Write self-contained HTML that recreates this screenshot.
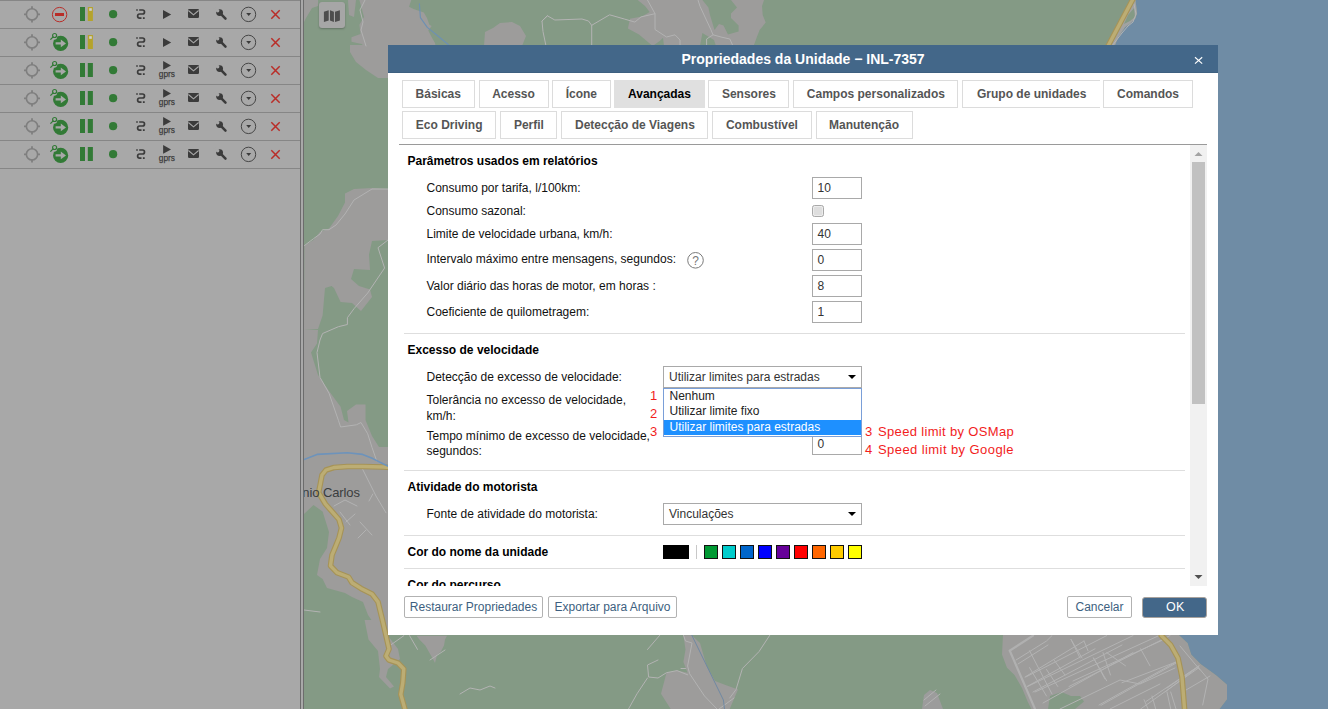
<!DOCTYPE html><html><head><meta charset="utf-8"><style>*{margin:0;padding:0;box-sizing:border-box}
html,body{width:1328px;height:709px;overflow:hidden;position:relative;font-family:"Liberation Sans",sans-serif;font-size:12px;color:#000;background:#849a85}
.a{position:absolute}
.t{position:absolute;white-space:nowrap}
.tab{position:absolute;height:28px;border:1px solid #dcdcdc;font-weight:bold;color:#555;text-align:center;line-height:26px;white-space:nowrap;font-size:12px;background:#fff}
.tab.on{background:#e0e0e0;border-color:#e0e0e0;color:#000}
.inp{position:absolute;width:50px;height:22px;border:1px solid #a9a9a9;background:#fff;padding-left:4.5px;line-height:20px;color:#333}
.sel{position:absolute;width:199px;height:22px;border:1px solid #a9a9a9;background:#fff;padding-left:5px;line-height:20px;color:#333}
.sep{position:absolute;width:781px;height:1px;background:#dedede}
.btn{position:absolute;top:596px;height:22px;border:1px solid #b2b2b2;border-radius:2px;background:#fff;color:#3d5f80;text-align:center;line-height:19px;padding-top:1px;white-space:nowrap}
.btn.ok{background:#436789;border-color:#a8a29d;color:#fff;font-size:12.5px;border-radius:3px;letter-spacing:0.2px;line-height:18px;padding-left:2px;padding-top:0;height:21px;top:596.5px;width:64.5px!important}
</style></head><body>
<svg class="a" style="left:0;top:0" width="304" height="709" viewBox="0 0 304 709">
<rect x="0" y="0" width="300" height="709" fill="#a8a8a8"/>
<rect x="0" y="0" width="300" height="1" fill="#868686"/>
<g transform="translate(0,0)">
<rect x="0" y="28" width="300" height="1" fill="#868686"/>
<circle cx="32" cy="14.4" r="5.6" fill="none" stroke="#7f7f7f" stroke-width="1.6"/>
<path d="M32 6.2v2.6M32 19.8v2.6M24 14.4h2.6M37.4 14.4h2.6" stroke="#7f7f7f" stroke-width="1.8"/>
<circle cx="59.6" cy="14.6" r="7.2" fill="none" stroke="#b92d28" stroke-width="1"/>
<rect x="55" y="13" width="9" height="3" fill="#b92d28"/>
<rect x="80" y="7" width="5" height="14" fill="#327a36"/>
<rect x="87.8" y="7" width="5.1" height="14" fill="#b5a32c"/>
<rect x="89.2" y="8.2" width="2.6" height="2.6" fill="#cfcfcf"/>
<circle cx="113.1" cy="14.2" r="4.1" fill="#327a36"/>
<path d="M136.2 10h1.6M139.2 10h3.3a2 2 0 0 1 0 4h-2.8a2.1 2.1 0 0 0 0 4.2h1.8M142.9 18.2h1.8" fill="none" stroke="#3b3b3b" stroke-width="1.7"/>
<path d="M163 10v9l8.2-4.5z" fill="#3b3b3b"/>
<rect x="188" y="9" width="11" height="9" rx="1.2" fill="#3b3b3b"/>
<path d="M188.4 10.5l5.1 4.3 5.1-4.3" fill="none" stroke="#a8a8a8" stroke-width="1.1"/>
<path d="M220.6 13.6l4.9 5" stroke="#3b3b3b" stroke-width="2.5" stroke-linecap="round"/>
<circle cx="219.6" cy="12.6" r="3.4" fill="#3b3b3b"/>
<circle cx="217.7" cy="10.7" r="1.7" fill="#a8a8a8"/>
<path d="M217.7 10.7l-3 -3" stroke="#a8a8a8" stroke-width="2.6"/>
<circle cx="248.5" cy="14.4" r="7.2" fill="none" stroke="#3a3a3a" stroke-width="0.9"/>
<path d="M246.2 13.1h5l-2.5 3z" fill="#3b3b3b"/>
<path d="M271.3 10.3l8.4 8.4M279.7 10.3l-8.4 8.4" stroke="#b92d28" stroke-width="1.5"/>
</g>
<g transform="translate(0,28)">
<rect x="0" y="28" width="300" height="1" fill="#868686"/>
<circle cx="32" cy="14.4" r="5.6" fill="none" stroke="#7f7f7f" stroke-width="1.6"/>
<path d="M32 6.2v2.6M32 19.8v2.6M24 14.4h2.6M37.4 14.4h2.6" stroke="#7f7f7f" stroke-width="1.8"/>
<circle cx="60.6" cy="15.4" r="7.6" fill="#327a36"/>
<circle cx="54" cy="8.6" r="3.2" fill="#a8a8a8"/>
<path d="M55.6 14.2h5.2v-2.6l5.2 3.8-5.2 3.8v-2.6h-5.2z" fill="#a8a8a8"/>
<circle cx="54.6" cy="7.5" r="2" fill="none" stroke="#327a36" stroke-width="1.2"/>
<path d="M53.2 8.9L50.4 11.6" stroke="#327a36" stroke-width="1.3"/>
<rect x="80" y="7" width="5" height="14" fill="#327a36"/>
<rect x="87.8" y="7" width="5.1" height="14" fill="#b5a32c"/>
<rect x="89.2" y="8.2" width="2.6" height="2.6" fill="#cfcfcf"/>
<circle cx="113.1" cy="14.2" r="4.1" fill="#327a36"/>
<path d="M136.2 10h1.6M139.2 10h3.3a2 2 0 0 1 0 4h-2.8a2.1 2.1 0 0 0 0 4.2h1.8M142.9 18.2h1.8" fill="none" stroke="#3b3b3b" stroke-width="1.7"/>
<path d="M163 10v9l8.2-4.5z" fill="#3b3b3b"/>
<rect x="188" y="9" width="11" height="9" rx="1.2" fill="#3b3b3b"/>
<path d="M188.4 10.5l5.1 4.3 5.1-4.3" fill="none" stroke="#a8a8a8" stroke-width="1.1"/>
<path d="M220.6 13.6l4.9 5" stroke="#3b3b3b" stroke-width="2.5" stroke-linecap="round"/>
<circle cx="219.6" cy="12.6" r="3.4" fill="#3b3b3b"/>
<circle cx="217.7" cy="10.7" r="1.7" fill="#a8a8a8"/>
<path d="M217.7 10.7l-3 -3" stroke="#a8a8a8" stroke-width="2.6"/>
<circle cx="248.5" cy="14.4" r="7.2" fill="none" stroke="#3a3a3a" stroke-width="0.9"/>
<path d="M246.2 13.1h5l-2.5 3z" fill="#3b3b3b"/>
<path d="M271.3 10.3l8.4 8.4M279.7 10.3l-8.4 8.4" stroke="#b92d28" stroke-width="1.5"/>
</g>
<g transform="translate(0,56)">
<rect x="0" y="28" width="300" height="1" fill="#868686"/>
<circle cx="32" cy="14.4" r="5.6" fill="none" stroke="#7f7f7f" stroke-width="1.6"/>
<path d="M32 6.2v2.6M32 19.8v2.6M24 14.4h2.6M37.4 14.4h2.6" stroke="#7f7f7f" stroke-width="1.8"/>
<circle cx="60.6" cy="15.4" r="7.6" fill="#327a36"/>
<circle cx="54" cy="8.6" r="3.2" fill="#a8a8a8"/>
<path d="M55.6 14.2h5.2v-2.6l5.2 3.8-5.2 3.8v-2.6h-5.2z" fill="#a8a8a8"/>
<circle cx="54.6" cy="7.5" r="2" fill="none" stroke="#327a36" stroke-width="1.2"/>
<path d="M53.2 8.9L50.4 11.6" stroke="#327a36" stroke-width="1.3"/>
<rect x="80" y="7" width="5" height="14" fill="#327a36"/>
<rect x="87.8" y="7" width="5.1" height="14" fill="#327a36"/>
<circle cx="113.1" cy="14.2" r="4.1" fill="#327a36"/>
<path d="M136.2 10h1.6M139.2 10h3.3a2 2 0 0 1 0 4h-2.8a2.1 2.1 0 0 0 0 4.2h1.8M142.9 18.2h1.8" fill="none" stroke="#3b3b3b" stroke-width="1.7"/>
<path d="M163.1 5v8.8l7.9-4.4z" fill="#3b3b3b"/>
<text x="158.8" y="21" font-family="Liberation Sans" font-size="9.5" fill="#3b3b3b" stroke="#3b3b3b" stroke-width="0.25" textLength="16.2" lengthAdjust="spacingAndGlyphs">gprs</text>
<rect x="188" y="9" width="11" height="9" rx="1.2" fill="#3b3b3b"/>
<path d="M188.4 10.5l5.1 4.3 5.1-4.3" fill="none" stroke="#a8a8a8" stroke-width="1.1"/>
<path d="M220.6 13.6l4.9 5" stroke="#3b3b3b" stroke-width="2.5" stroke-linecap="round"/>
<circle cx="219.6" cy="12.6" r="3.4" fill="#3b3b3b"/>
<circle cx="217.7" cy="10.7" r="1.7" fill="#a8a8a8"/>
<path d="M217.7 10.7l-3 -3" stroke="#a8a8a8" stroke-width="2.6"/>
<circle cx="248.5" cy="14.4" r="7.2" fill="none" stroke="#3a3a3a" stroke-width="0.9"/>
<path d="M246.2 13.1h5l-2.5 3z" fill="#3b3b3b"/>
<path d="M271.3 10.3l8.4 8.4M279.7 10.3l-8.4 8.4" stroke="#b92d28" stroke-width="1.5"/>
</g>
<g transform="translate(0,84)">
<rect x="0" y="28" width="300" height="1" fill="#868686"/>
<circle cx="32" cy="14.4" r="5.6" fill="none" stroke="#7f7f7f" stroke-width="1.6"/>
<path d="M32 6.2v2.6M32 19.8v2.6M24 14.4h2.6M37.4 14.4h2.6" stroke="#7f7f7f" stroke-width="1.8"/>
<circle cx="60.6" cy="15.4" r="7.6" fill="#327a36"/>
<circle cx="54" cy="8.6" r="3.2" fill="#a8a8a8"/>
<path d="M55.6 14.2h5.2v-2.6l5.2 3.8-5.2 3.8v-2.6h-5.2z" fill="#a8a8a8"/>
<circle cx="54.6" cy="7.5" r="2" fill="none" stroke="#327a36" stroke-width="1.2"/>
<path d="M53.2 8.9L50.4 11.6" stroke="#327a36" stroke-width="1.3"/>
<rect x="80" y="7" width="5" height="14" fill="#327a36"/>
<rect x="87.8" y="7" width="5.1" height="14" fill="#327a36"/>
<circle cx="113.1" cy="14.2" r="4.1" fill="#327a36"/>
<path d="M136.2 10h1.6M139.2 10h3.3a2 2 0 0 1 0 4h-2.8a2.1 2.1 0 0 0 0 4.2h1.8M142.9 18.2h1.8" fill="none" stroke="#3b3b3b" stroke-width="1.7"/>
<path d="M163.1 5v8.8l7.9-4.4z" fill="#3b3b3b"/>
<text x="158.8" y="21" font-family="Liberation Sans" font-size="9.5" fill="#3b3b3b" stroke="#3b3b3b" stroke-width="0.25" textLength="16.2" lengthAdjust="spacingAndGlyphs">gprs</text>
<rect x="188" y="9" width="11" height="9" rx="1.2" fill="#3b3b3b"/>
<path d="M188.4 10.5l5.1 4.3 5.1-4.3" fill="none" stroke="#a8a8a8" stroke-width="1.1"/>
<path d="M220.6 13.6l4.9 5" stroke="#3b3b3b" stroke-width="2.5" stroke-linecap="round"/>
<circle cx="219.6" cy="12.6" r="3.4" fill="#3b3b3b"/>
<circle cx="217.7" cy="10.7" r="1.7" fill="#a8a8a8"/>
<path d="M217.7 10.7l-3 -3" stroke="#a8a8a8" stroke-width="2.6"/>
<circle cx="248.5" cy="14.4" r="7.2" fill="none" stroke="#3a3a3a" stroke-width="0.9"/>
<path d="M246.2 13.1h5l-2.5 3z" fill="#3b3b3b"/>
<path d="M271.3 10.3l8.4 8.4M279.7 10.3l-8.4 8.4" stroke="#b92d28" stroke-width="1.5"/>
</g>
<g transform="translate(0,112)">
<rect x="0" y="28" width="300" height="1" fill="#868686"/>
<circle cx="32" cy="14.4" r="5.6" fill="none" stroke="#7f7f7f" stroke-width="1.6"/>
<path d="M32 6.2v2.6M32 19.8v2.6M24 14.4h2.6M37.4 14.4h2.6" stroke="#7f7f7f" stroke-width="1.8"/>
<circle cx="60.6" cy="15.4" r="7.6" fill="#327a36"/>
<circle cx="54" cy="8.6" r="3.2" fill="#a8a8a8"/>
<path d="M55.6 14.2h5.2v-2.6l5.2 3.8-5.2 3.8v-2.6h-5.2z" fill="#a8a8a8"/>
<circle cx="54.6" cy="7.5" r="2" fill="none" stroke="#327a36" stroke-width="1.2"/>
<path d="M53.2 8.9L50.4 11.6" stroke="#327a36" stroke-width="1.3"/>
<rect x="80" y="7" width="5" height="14" fill="#327a36"/>
<rect x="87.8" y="7" width="5.1" height="14" fill="#327a36"/>
<circle cx="113.1" cy="14.2" r="4.1" fill="#327a36"/>
<path d="M136.2 10h1.6M139.2 10h3.3a2 2 0 0 1 0 4h-2.8a2.1 2.1 0 0 0 0 4.2h1.8M142.9 18.2h1.8" fill="none" stroke="#3b3b3b" stroke-width="1.7"/>
<path d="M163.1 5v8.8l7.9-4.4z" fill="#3b3b3b"/>
<text x="158.8" y="21" font-family="Liberation Sans" font-size="9.5" fill="#3b3b3b" stroke="#3b3b3b" stroke-width="0.25" textLength="16.2" lengthAdjust="spacingAndGlyphs">gprs</text>
<rect x="188" y="9" width="11" height="9" rx="1.2" fill="#3b3b3b"/>
<path d="M188.4 10.5l5.1 4.3 5.1-4.3" fill="none" stroke="#a8a8a8" stroke-width="1.1"/>
<path d="M220.6 13.6l4.9 5" stroke="#3b3b3b" stroke-width="2.5" stroke-linecap="round"/>
<circle cx="219.6" cy="12.6" r="3.4" fill="#3b3b3b"/>
<circle cx="217.7" cy="10.7" r="1.7" fill="#a8a8a8"/>
<path d="M217.7 10.7l-3 -3" stroke="#a8a8a8" stroke-width="2.6"/>
<circle cx="248.5" cy="14.4" r="7.2" fill="none" stroke="#3a3a3a" stroke-width="0.9"/>
<path d="M246.2 13.1h5l-2.5 3z" fill="#3b3b3b"/>
<path d="M271.3 10.3l8.4 8.4M279.7 10.3l-8.4 8.4" stroke="#b92d28" stroke-width="1.5"/>
</g>
<g transform="translate(0,140)">
<rect x="0" y="28" width="300" height="1" fill="#868686"/>
<circle cx="32" cy="14.4" r="5.6" fill="none" stroke="#7f7f7f" stroke-width="1.6"/>
<path d="M32 6.2v2.6M32 19.8v2.6M24 14.4h2.6M37.4 14.4h2.6" stroke="#7f7f7f" stroke-width="1.8"/>
<circle cx="60.6" cy="15.4" r="7.6" fill="#327a36"/>
<circle cx="54" cy="8.6" r="3.2" fill="#a8a8a8"/>
<path d="M55.6 14.2h5.2v-2.6l5.2 3.8-5.2 3.8v-2.6h-5.2z" fill="#a8a8a8"/>
<circle cx="54.6" cy="7.5" r="2" fill="none" stroke="#327a36" stroke-width="1.2"/>
<path d="M53.2 8.9L50.4 11.6" stroke="#327a36" stroke-width="1.3"/>
<rect x="80" y="7" width="5" height="14" fill="#327a36"/>
<rect x="87.8" y="7" width="5.1" height="14" fill="#327a36"/>
<circle cx="113.1" cy="14.2" r="4.1" fill="#327a36"/>
<path d="M136.2 10h1.6M139.2 10h3.3a2 2 0 0 1 0 4h-2.8a2.1 2.1 0 0 0 0 4.2h1.8M142.9 18.2h1.8" fill="none" stroke="#3b3b3b" stroke-width="1.7"/>
<path d="M163.1 5v8.8l7.9-4.4z" fill="#3b3b3b"/>
<text x="158.8" y="21" font-family="Liberation Sans" font-size="9.5" fill="#3b3b3b" stroke="#3b3b3b" stroke-width="0.25" textLength="16.2" lengthAdjust="spacingAndGlyphs">gprs</text>
<rect x="188" y="9" width="11" height="9" rx="1.2" fill="#3b3b3b"/>
<path d="M188.4 10.5l5.1 4.3 5.1-4.3" fill="none" stroke="#a8a8a8" stroke-width="1.1"/>
<path d="M220.6 13.6l4.9 5" stroke="#3b3b3b" stroke-width="2.5" stroke-linecap="round"/>
<circle cx="219.6" cy="12.6" r="3.4" fill="#3b3b3b"/>
<circle cx="217.7" cy="10.7" r="1.7" fill="#a8a8a8"/>
<path d="M217.7 10.7l-3 -3" stroke="#a8a8a8" stroke-width="2.6"/>
<circle cx="248.5" cy="14.4" r="7.2" fill="none" stroke="#3a3a3a" stroke-width="0.9"/>
<path d="M246.2 13.1h5l-2.5 3z" fill="#3b3b3b"/>
<path d="M271.3 10.3l8.4 8.4M279.7 10.3l-8.4 8.4" stroke="#b92d28" stroke-width="1.5"/>
</g>
<rect x="300" y="0" width="1" height="709" fill="#6c6c6c"/>
<rect x="301" y="0" width="2" height="709" fill="#a8a8a8"/>
<rect x="303" y="0" width="1" height="709" fill="#6c6c6c"/>
</svg>
<div class="a" style="left:304px;top:0;width:1024px;height:709px;overflow:hidden">
<svg class="a" style="left:-304px;top:0" width="1328" height="709" viewBox="0 0 1328 709">
<rect x="304" y="0" width="1024" height="709" fill="#849a85"/>
<path d="M304.0 0.0 L318.0 0.0 L318.0 6.0 L312.0 8.0 L306.0 18.0 L304.0 22.0 Z" fill="#9d9c9b"/>
<path d="M359.4 0.0 L411.3 0.0 L409.0 6.8 L413.6 9.0 L423.8 12.4 L427.0 18.0 L429.4 24.8 L431.7 26.0 L428.3 30.5 L431.7 37.3 L435.0 43.0 L435.6 46.0 L364.0 46.0 L361.6 44.0 L351.5 41.8 L351.5 37.3 L360.5 34.0 L359.4 24.8 L364.0 17.0 Z" fill="#9d9c9b"/>
<path d="M348.0 0.0 L356.0 0.0 L354.0 17.0 L349.0 15.0 Z" fill="#9d9c9b"/>
<path d="M484.0 46.0 L485.0 32.0 L493.0 28.0 L500.0 23.0 L512.0 22.0 L520.0 26.0 L526.0 36.0 L522.0 46.0 Z" fill="#9d9c9b"/>
<path d="M637.7 0.0 L702.4 0.0 L708.4 7.5 L710.0 15.0 L714.5 30.0 L719.0 24.0 L723.5 25.6 L728.0 34.6 L738.6 31.6 L738.6 25.6 L731.0 18.0 L731.0 13.5 L737.0 7.5 L731.0 0.0 L764.0 0.0 L762.0 6.0 L762.7 15.0 L765.7 22.6 L759.6 30.0 L756.6 37.7 L753.6 46.0 L716.0 46.0 L714.0 40.0 L702.4 33.0 L700.0 46.0 L664.0 46.0 L663.0 37.7 L660.0 40.7 L652.7 46.0 L639.0 34.6 L627.9 28.6 L630.0 18.8 L642.0 16.6 L649.7 12.0 L645.0 6.0 Z" fill="#9d9c9b"/>
<path d="M350.0 45.0 L388.0 45.0 L388.0 78.0 L378.0 78.0 L366.0 70.0 L356.0 62.0 L350.0 52.0 Z" fill="#9d9c9b"/>
<path d="M304.5 245.5 L313.5 240.0 L320.0 232.0 L329.0 228.5 L338.0 216.0 L345.0 202.6 L345.0 193.5 L354.0 189.0 L372.0 188.0 L388.0 189.0 L388.0 240.0 L372.0 241.0 L369.0 254.5 L370.0 270.0 L354.0 269.0 L351.0 279.0 L359.0 286.0 L370.0 289.5 L372.0 297.0 L361.0 311.0 L352.0 303.0 L340.6 302.0 L334.0 288.0 L331.6 286.0 L325.0 288.0 L322.6 315.4 L318.0 329.0 L304.0 329.0 Z" fill="#9d9c9b"/>
<path d="M304.0 329.0 L318.0 330.0 L317.0 343.5 L311.0 352.6 L318.0 375.0 L329.0 391.0 L340.6 406.7 L344.0 420.0 L348.5 422.5 L347.0 411.0 L356.0 404.5 L365.5 404.5 L365.5 420.0 L372.0 436.0 L379.0 447.0 L388.0 447.0 L388.0 640.0 L374.5 624.5 L368.0 615.0 L363.0 602.0 L352.0 597.0 L345.0 593.0 L327.0 588.0 L322.6 579.0 L317.0 575.0 L320.0 559.0 L327.0 548.0 L329.0 532.0 L322.6 511.6 L313.5 505.0 L304.0 514.0 Z" fill="#9d9c9b"/>
<path d="M364.6 620.0 L388.0 620.0 L388.0 635.7 L398.0 649.0 L400.0 659.0 L388.0 669.0 L386.0 677.0 L394.0 686.5 L390.0 688.5 L379.0 677.0 L380.0 669.0 L378.0 651.0 L368.5 639.6 Z" fill="#9d9c9b"/>
<path d="M416.5 635.7 L419.4 639.6 L425.3 645.5 L433.1 659.2 L435.0 663.0 L437.0 655.2 L441.0 651.3 L444.0 645.5 L445.0 639.6 L447.0 635.7 Z" fill="#9d9c9b"/>
<path d="M922.0 709.0 L924.0 695.0 L930.0 690.0 L937.0 693.0 L943.0 709.0 Z" fill="#9c9c9c"/>
<path d="M683.4 635.2 L691.8 635.2 L700.0 643.0 L706.6 666.0 L715.0 681.0 L725.5 685.0 L738.0 689.6 L729.7 709.0 L670.7 709.0 L661.0 693.8 L666.5 672.7 L677.0 670.6 L687.6 672.7 L683.4 662.0 L685.5 649.5 Z" fill="#9d9c9b"/>
<path d="M1003.0 634.0 L1178.0 634.0 L1187.7 643.0 L1191.4 654.5 L1200.8 664.0 L1216.0 675.0 L1227.0 684.6 L1227.0 699.6 L1219.7 709.0 L1031.4 709.0 L1027.6 701.5 L1022.0 688.0 L1014.5 675.0 L1007.0 667.7 L1002.0 654.5 Z" fill="#9d9c9b"/>
<path d="M1048.0 709.0 L1050.0 696.0 L1061.5 692.0 L1071.0 696.0 L1080.0 696.0 L1084.0 701.5 L1075.0 709.0 Z" fill="#849a85"/>
<path d="M1135.5 0.0 L1328.0 0.0 L1328.0 709.0 L1219.7 709.0 L1227.0 699.6 L1227.0 684.6 L1216.0 675.0 L1200.8 664.0 L1191.4 654.5 L1187.7 643.0 L1178.0 634.0 L1160.0 600.0 L1114.7 46.0 L1118.6 36.4 L1125.0 27.3 L1130.0 23.4 L1135.5 18.2 L1137.0 13.0 Z" fill="#6f8ca5"/>
<path d="M1131.0 0.0 L1135.5 0.0 L1137.0 13.0 L1135.5 18.2 L1130.0 23.4 L1125.0 27.3 L1118.6 36.4 L1114.7 46.0 L1108.0 46.0 Z" fill="#a2a2a2"/>
<path d="M1134.0 8.0 L1135.0 17.0 L1130.0 21.0 L1124.0 24.0 L1128.0 15.0 Z" fill="#849a85"/>
<path d="M304.5 245.5 L313.5 238.7 L320.0 234.0 L322.6 229.7 L329.0 229.7 L336.0 225.0 L345.0 214.0 L354.0 200.0 L372.0 189.0 L388.0 189.0" fill="none" stroke="#b3b3b3" stroke-width="1.0" stroke-linejoin="round" stroke-linecap="round" />
<path d="M388.0 240.0 L378.0 247.7 L384.6 268.0 L367.7 293.0 L354.0 308.7 L347.4 317.7 L347.4 324.5 L338.4 326.7 L322.6 333.5 L320.0 340.0 L317.0 352.6 L320.0 377.4 L329.0 393.2 L338.4 420.3 L340.6 427.0 L356.4 424.8 L361.0 422.5 L367.7 433.8 L372.0 447.4 L376.7 461.0" fill="none" stroke="#b3b3b3" stroke-width="1.0" stroke-linejoin="round" stroke-linecap="round" />
<path d="M361.0 466.0 L368.0 480.0 L376.0 496.0 L386.0 512.8" fill="none" stroke="#b3b3b3" stroke-width="1.0" stroke-linejoin="round" stroke-linecap="round" />
<path d="M372.8 494.0 L369.0 501.0" fill="none" stroke="#b3b3b3" stroke-width="1.0" stroke-linejoin="round" stroke-linecap="round" />
<path d="M334.0 506.0 L345.0 500.0 L357.0 506.0" fill="none" stroke="#b3b3b3" stroke-width="1.0" stroke-linejoin="round" stroke-linecap="round" />
<path d="M340.0 512.0 L350.0 525.0" fill="none" stroke="#b3b3b3" stroke-width="1.0" stroke-linejoin="round" stroke-linecap="round" />
<path d="M355.0 514.0 L346.0 522.0" fill="none" stroke="#b3b3b3" stroke-width="1.0" stroke-linejoin="round" stroke-linecap="round" />
<path d="M360.0 522.0 L372.0 535.0" fill="none" stroke="#b3b3b3" stroke-width="1.0" stroke-linejoin="round" stroke-linecap="round" />
<path d="M366.0 530.0 L358.0 538.0" fill="none" stroke="#b3b3b3" stroke-width="1.0" stroke-linejoin="round" stroke-linecap="round" />
<path d="M304.0 610.0 L320.0 612.0" fill="none" stroke="#b3b3b3" stroke-width="1.0" stroke-linejoin="round" stroke-linecap="round" />
<path d="M542.0 21.0 L547.4 15.8 L554.8 20.0 L582.0 19.0 L588.5 21.0 L591.7 25.3 L609.6 14.8 L624.3 19.0 L634.9 22.1 L641.0 16.9 L655.0 13.7 L655.0 29.5 L666.5 37.0 L675.0 34.8 L680.0 40.0 L680.0 46.0" fill="none" stroke="#b3b3b3" stroke-width="1.0" stroke-linejoin="round" stroke-linecap="round" />
<path d="M547.4 15.8 L542.0 21.0 L543.0 31.6 L546.0 46.0" fill="none" stroke="#b3b3b3" stroke-width="1.0" stroke-linejoin="round" stroke-linecap="round" />
<path d="M591.7 25.3 L591.7 46.0" fill="none" stroke="#b3b3b3" stroke-width="1.0" stroke-linejoin="round" stroke-linecap="round" />
<path d="M647.5 0.0 L655.0 13.7" fill="none" stroke="#b3b3b3" stroke-width="1.0" stroke-linejoin="round" stroke-linecap="round" />
<path d="M698.0 0.0 L700.0 6.3 L710.8 29.5 L713.0 34.8 L721.0 37.0 L729.8 39.0 L733.0 46.0" fill="none" stroke="#b3b3b3" stroke-width="1.0" stroke-linejoin="round" stroke-linecap="round" />
<path d="M713.0 34.8 L706.6 39.0 L706.6 46.0" fill="none" stroke="#b3b3b3" stroke-width="1.0" stroke-linejoin="round" stroke-linecap="round" />
<path d="M365.0 0.0 L360.0 10.0 L363.0 22.0 L361.0 30.0 L366.0 46.0" fill="none" stroke="#b3b3b3" stroke-width="1.0" stroke-linejoin="round" stroke-linecap="round" />
<path d="M1009.8 650.7 L1033.0 635.6" fill="none" stroke="#b3b3b3" stroke-width="1.0" stroke-linejoin="round" stroke-linecap="round" />
<path d="M1009.8 650.7 L1035.0 709.0" fill="none" stroke="#b3b3b3" stroke-width="1.0" stroke-linejoin="round" stroke-linecap="round" />
<path d="M1018.0 664.0 L1048.0 645.0" fill="none" stroke="#b3b3b3" stroke-width="1.0" stroke-linejoin="round" stroke-linecap="round" />
<path d="M1025.0 677.0 L1084.0 641.0" fill="none" stroke="#b3b3b3" stroke-width="1.0" stroke-linejoin="round" stroke-linecap="round" />
<path d="M1027.0 686.5 L1095.0 648.8" fill="none" stroke="#b3b3b3" stroke-width="1.0" stroke-linejoin="round" stroke-linecap="round" />
<path d="M1033.0 692.0 L1122.0 645.0" fill="none" stroke="#b3b3b3" stroke-width="1.0" stroke-linejoin="round" stroke-linecap="round" />
<path d="M1043.0 703.0 L1133.0 652.6" fill="none" stroke="#b3b3b3" stroke-width="1.0" stroke-linejoin="round" stroke-linecap="round" />
<path d="M1069.0 686.5 L1170.0 635.6" fill="none" stroke="#b3b3b3" stroke-width="1.0" stroke-linejoin="round" stroke-linecap="round" />
<path d="M1101.0 705.3 L1178.0 662.0" fill="none" stroke="#b3b3b3" stroke-width="1.0" stroke-linejoin="round" stroke-linecap="round" />
<path d="M1122.0 682.7 L1176.0 662.0" fill="none" stroke="#b3b3b3" stroke-width="1.0" stroke-linejoin="round" stroke-linecap="round" />
<path d="M1146.0 701.5 L1199.0 665.8" fill="none" stroke="#b3b3b3" stroke-width="1.0" stroke-linejoin="round" stroke-linecap="round" />
<path d="M1165.0 692.0 L1197.0 667.6" fill="none" stroke="#b3b3b3" stroke-width="1.0" stroke-linejoin="round" stroke-linecap="round" />
<path d="M1082.0 658.0 L1071.0 639.4" fill="none" stroke="#b3b3b3" stroke-width="1.0" stroke-linejoin="round" stroke-linecap="round" />
<path d="M1088.0 650.7 L1084.0 641.0" fill="none" stroke="#b3b3b3" stroke-width="1.0" stroke-linejoin="round" stroke-linecap="round" />
<path d="M1093.5 658.0 L1106.7 680.8" fill="none" stroke="#b3b3b3" stroke-width="1.0" stroke-linejoin="round" stroke-linecap="round" />
<path d="M1103.0 652.6 L1110.5 675.0" fill="none" stroke="#b3b3b3" stroke-width="1.0" stroke-linejoin="round" stroke-linecap="round" />
<path d="M1046.5 669.5 L1057.8 686.5" fill="none" stroke="#b3b3b3" stroke-width="1.0" stroke-linejoin="round" stroke-linecap="round" />
<path d="M1152.0 696.0 L1155.7 709.0" fill="none" stroke="#b3b3b3" stroke-width="1.0" stroke-linejoin="round" stroke-linecap="round" />
<path d="M1144.0 699.6 L1148.0 709.0" fill="none" stroke="#b3b3b3" stroke-width="1.0" stroke-linejoin="round" stroke-linecap="round" />
<path d="M1170.7 692.0 L1176.0 709.0" fill="none" stroke="#b3b3b3" stroke-width="1.0" stroke-linejoin="round" stroke-linecap="round" />
<path d="M1016.0 660.0 L1046.5 641.0 L1052.0 635.6" fill="none" stroke="#b3b3b3" stroke-width="1.0" stroke-linejoin="round" stroke-linecap="round" />
<path d="M1025.8 677.0 L1106.7 635.6" fill="none" stroke="#b3b3b3" stroke-width="1.0" stroke-linejoin="round" stroke-linecap="round" />
<path d="M1027.6 686.5 L1133.0 635.6" fill="none" stroke="#b3b3b3" stroke-width="1.0" stroke-linejoin="round" stroke-linecap="round" />
<path d="M1035.0 692.0 L1159.0 635.6" fill="none" stroke="#b3b3b3" stroke-width="1.0" stroke-linejoin="round" stroke-linecap="round" />
<path d="M1073.0 681.0 L1165.0 639.0" fill="none" stroke="#b3b3b3" stroke-width="1.0" stroke-linejoin="round" stroke-linecap="round" />
<path d="M1099.0 705.0 L1176.0 662.0" fill="none" stroke="#b3b3b3" stroke-width="1.0" stroke-linejoin="round" stroke-linecap="round" />
<path d="M1167.0 688.0 L1199.0 666.0" fill="none" stroke="#b3b3b3" stroke-width="1.0" stroke-linejoin="round" stroke-linecap="round" />
<path d="M1140.6 709.0 L1199.0 667.6" fill="none" stroke="#b3b3b3" stroke-width="1.0" stroke-linejoin="round" stroke-linecap="round" />
<path d="M1071.0 639.4 L1080.0 658.0" fill="none" stroke="#b3b3b3" stroke-width="1.0" stroke-linejoin="round" stroke-linecap="round" />
<path d="M1029.5 650.7 L1052.0 694.0" fill="none" stroke="#b3b3b3" stroke-width="1.0" stroke-linejoin="round" stroke-linecap="round" />
<path d="M1029.5 667.6 L1046.5 696.0" fill="none" stroke="#b3b3b3" stroke-width="1.0" stroke-linejoin="round" stroke-linecap="round" />
<path d="M1054.0 660.0 L1065.0 675.0" fill="none" stroke="#b3b3b3" stroke-width="1.0" stroke-linejoin="round" stroke-linecap="round" />
<path d="M1093.5 658.0 L1105.0 679.0" fill="none" stroke="#b3b3b3" stroke-width="1.0" stroke-linejoin="round" stroke-linecap="round" />
<path d="M1106.7 652.6 L1125.5 665.8" fill="none" stroke="#b3b3b3" stroke-width="1.0" stroke-linejoin="round" stroke-linecap="round" />
<path d="M1140.6 648.8 L1150.0 665.8" fill="none" stroke="#b3b3b3" stroke-width="1.0" stroke-linejoin="round" stroke-linecap="round" />
<path d="M1167.0 692.0 L1170.7 709.0" fill="none" stroke="#b3b3b3" stroke-width="1.0" stroke-linejoin="round" stroke-linecap="round" />
<path d="M1197.0 665.8 L1208.0 679.0 L1202.7 705.0" fill="none" stroke="#b3b3b3" stroke-width="1.0" stroke-linejoin="round" stroke-linecap="round" />
<path d="M1060.0 709.0 L1120.0 680.0 L1140.0 684.0 L1175.0 668.0" fill="none" stroke="#b3b3b3" stroke-width="1.0" stroke-linejoin="round" stroke-linecap="round" />
<path d="M1110.0 709.0 L1160.0 684.0" fill="none" stroke="#b3b3b3" stroke-width="1.0" stroke-linejoin="round" stroke-linecap="round" />
<path d="M1180.0 646.0 L1200.0 670.0" fill="none" stroke="#b3b3b3" stroke-width="1.0" stroke-linejoin="round" stroke-linecap="round" />
<path d="M1186.0 690.0 L1210.0 676.0" fill="none" stroke="#b3b3b3" stroke-width="1.0" stroke-linejoin="round" stroke-linecap="round" />
<path d="M1112.0 46.0 L1122.0 33.0 L1128.0 26.0 L1133.0 22.0 L1136.0 14.0 L1134.0 4.0" fill="none" stroke="#b3b3b3" stroke-width="1.0" stroke-linejoin="round" stroke-linecap="round" />
<path d="M390.0 645.5 L403.8 635.7" fill="none" stroke="#b3b3b3" stroke-width="1.0" stroke-linejoin="round" stroke-linecap="round" />
<path d="M409.6 635.7 L417.5 649.4" fill="none" stroke="#b3b3b3" stroke-width="1.0" stroke-linejoin="round" stroke-linecap="round" />
<path d="M430.0 660.0 L445.0 650.0" fill="none" stroke="#b3b3b3" stroke-width="1.0" stroke-linejoin="round" stroke-linecap="round" />
<path d="M460.0 694.0 L470.0 688.0 L480.0 690.0 L490.0 686.0 L495.0 688.0" fill="none" stroke="#b3b3b3" stroke-width="1.0" stroke-linejoin="round" stroke-linecap="round" />
<path d="M925.0 706.0 L940.0 694.0" fill="none" stroke="#b3b3b3" stroke-width="1.0" stroke-linejoin="round" stroke-linecap="round" />
<path d="M924.0 700.0 L936.0 690.0" fill="none" stroke="#b3b3b3" stroke-width="1.0" stroke-linejoin="round" stroke-linecap="round" />
<path d="M683.4 635.0 L685.5 641.0 L692.0 643.0 L687.6 666.0 L689.7 673.8 L704.5 696.0 L717.0 709.0" fill="none" stroke="#b3b3b3" stroke-width="1.0" stroke-linejoin="round" stroke-linecap="round" />
<path d="M685.5 668.5 L681.0 668.5" fill="none" stroke="#b3b3b3" stroke-width="1.0" stroke-linejoin="round" stroke-linecap="round" />
<path d="M734.0 698.0 L719.0 709.0" fill="none" stroke="#b3b3b3" stroke-width="1.0" stroke-linejoin="round" stroke-linecap="round" />
<path d="M769.8 635.2 L759.0 651.6 L742.4 668.5 L736.0 689.6 L729.7 698.0" fill="none" stroke="#b3b3b3" stroke-width="1.0" stroke-linejoin="round" stroke-linecap="round" />
<path d="M660.0 635.0 L647.5 649.5" fill="none" stroke="#b3b3b3" stroke-width="1.0" stroke-linejoin="round" stroke-linecap="round" />
<path d="M658.0 660.0 L647.5 665.0 L648.6 677.0 L658.0 678.0 L666.5 672.7 L677.0 670.6 L687.6 674.8" fill="none" stroke="#b3b3b3" stroke-width="1.0" stroke-linejoin="round" stroke-linecap="round" />
<path d="M647.5 678.0 L637.0 693.8 L628.5 709.0" fill="none" stroke="#b3b3b3" stroke-width="1.0" stroke-linejoin="round" stroke-linecap="round" />
<path d="M1009.8 650.7 L1033.0 635.6" fill="none" stroke="#b0b0b0" stroke-width="2.2" stroke-linejoin="round" stroke-linecap="round" />
<path d="M1009.8 650.7 L1035.0 709.0" fill="none" stroke="#b0b0b0" stroke-width="2.2" stroke-linejoin="round" stroke-linecap="round" />
<path d="M1133.5 -2.0 L1108.0 46.0" fill="none" stroke="#a69357" stroke-width="5.6" stroke-linejoin="round" stroke-linecap="round" />
<path d="M1133.5 -2.0 L1108.0 46.0" fill="none" stroke="#bcad74" stroke-width="3.4" stroke-linejoin="round" stroke-linecap="round" />
<path d="M390.0 467.5 L383.0 467.0 L362.6 466.5 L347.4 466.5 L334.0 467.5 L326.0 470.0 L322.0 475.0 L320.3 484.0 L318.6 492.5 L325.4 504.0 L339.0 519.5 L341.5 528.0 L339.0 538.0 L335.5 546.6 L332.0 555.0 L330.5 565.8 L337.0 572.6 L348.5 577.0 L352.0 582.7 L361.0 588.4 L372.0 594.0 L378.0 601.9 L382.4 620.0 L386.0 635.7 L389.0 649.0 L386.0 656.0 L389.0 660.0 L398.0 663.0 L403.8 669.0 L402.8 682.6 L400.8 694.4 L405.7 712.0" fill="none" stroke="#a69357" stroke-width="5.6" stroke-linejoin="round" stroke-linecap="round" />
<path d="M390.0 467.5 L383.0 467.0 L362.6 466.5 L347.4 466.5 L334.0 467.5 L326.0 470.0 L322.0 475.0 L320.3 484.0 L318.6 492.5 L325.4 504.0 L339.0 519.5 L341.5 528.0 L339.0 538.0 L335.5 546.6 L332.0 555.0 L330.5 565.8 L337.0 572.6 L348.5 577.0 L352.0 582.7 L361.0 588.4 L372.0 594.0 L378.0 601.9 L382.4 620.0 L386.0 635.7 L389.0 649.0 L386.0 656.0 L389.0 660.0 L398.0 663.0 L403.8 669.0 L402.8 682.6 L400.8 694.4 L405.7 712.0" fill="none" stroke="#bcad74" stroke-width="3.4" stroke-linejoin="round" stroke-linecap="round" />
<path d="M1161.3 635.6 L1170.7 645.0 L1178.0 658.0 L1182.0 677.0 L1184.8 712.0" fill="none" stroke="#a69357" stroke-width="5.6" stroke-linejoin="round" stroke-linecap="round" />
<path d="M1161.3 635.6 L1170.7 645.0 L1178.0 658.0 L1182.0 677.0 L1184.8 712.0" fill="none" stroke="#bcad74" stroke-width="3.4" stroke-linejoin="round" stroke-linecap="round" />
<path d="M691.8 635.2 L723.4 700.0 L724.5 709.0" fill="none" stroke="#7089a3" stroke-width="1.0" stroke-linejoin="round" stroke-linecap="round" />
<path d="M419.4 3.9 L420.4 17.6 L427.3 27.4 L437.0 35.2 L448.8 45.0" fill="none" stroke="#6d90b3" stroke-width="1.1" stroke-linejoin="round" stroke-linecap="round" />
<path d="M304.0 459.5 L317.0 454.4 L347.4 452.7 L362.6 454.4 L372.8 458.6 L383.0 463.7 L390.0 467.0" fill="none" stroke="#6d93bb" stroke-width="1.6" stroke-linejoin="round" stroke-linecap="round" />
</svg>
<div class="t" style="left:-28px;top:485.60px;font-size:13px;line-height:13px;color:#3a3c3e;letter-spacing:-0.1px">Antônio Carlos</div>
<div class="a" style="left:15px;top:2px;width:26px;height:26px;border-radius:3px;background:#a6a6a6;box-shadow:0 1px 2px rgba(0,0,0,0.25)"></div>
<svg class="a" style="left:15px;top:2px" width="26" height="26"><path d="M4.9 9.7 L9.7 8.2 L9.7 18.5 L4.9 20 Z M11 8.2 L14.9 9.7 L14.9 20 L11 18.5 Z M16 9.7 L20.9 8.2 L20.9 18.5 L16 20 Z" fill="#4d4d4d"/></svg>
</div>
<div class="a" style="left:388px;top:45px;width:830px;height:590px;background:#fff"></div>
<div class="a" style="left:388px;top:45px;width:830px;height:28px;background:#436789;border-bottom:1px solid #3d6080"></div>
<div class="t" style="left:681.5px;top:52.15px;font-size:14px;line-height:14px;font-weight:bold;color:#fff;">Propriedades da Unidade − INL-7357</div>
<svg class="a" style="left:1190px;top:52px" width="16" height="16"><path d="M5 5.2 L12.2 11.6 M12.2 5.2 L5 11.6" stroke="#fff" stroke-width="1.15"/></svg>
<div class="tab" style="left:402.0px;top:80px;width:72.5px;">Básicas</div>
<div class="tab" style="left:478.5px;top:80px;width:70.0px;">Acesso</div>
<div class="tab" style="left:552.0px;top:80px;width:58.6px;">Ícone</div>
<div class="tab on" style="left:614.0px;top:80px;width:91.0px;">Avançadas</div>
<div class="tab" style="left:708.4px;top:80px;width:81.1px;">Sensores</div>
<div class="tab" style="left:793.4px;top:80px;width:165.0px;">Campos personalizados</div>
<div class="tab" style="left:962.3px;top:80px;width:137.7px;border-right:none;">Grupo de unidades</div>
<div class="tab" style="left:1103.3px;top:80px;width:89.5px;">Comandos</div>
<div class="tab" style="left:402.0px;top:111px;width:94.4px">Eco Driving</div>
<div class="tab" style="left:500.3px;top:111px;width:57.2px">Perfil</div>
<div class="tab" style="left:561.3px;top:111px;width:147.2px">Detecção de Viagens</div>
<div class="tab" style="left:712.3px;top:111px;width:99.3px">Combustível</div>
<div class="tab" style="left:815.5px;top:111px;width:97.1px">Manutenção</div>
<div class="a" style="left:399px;top:144px;width:808px;height:1px;background:#9a9a9a"></div>
<div class="a" style="left:1190px;top:145px;width:17px;height:441px;background:#f1f1f1"></div>
<div class="a" style="left:1192px;top:162px;width:13px;height:242px;background:#c1c1c1"></div>
<svg class="a" style="left:1190px;top:145px" width="17" height="441"><path d="M4.5 11 L8.5 7 L12.5 11 Z" fill="#a3a3a3"/><path d="M4.5 430 L12.5 430 L8.5 434 Z" fill="#505050"/></svg>
<div class="t" style="left:407.5px;top:154.84px;font-size:12px;line-height:12px;font-weight:bold;">Parâmetros usados em relatórios</div>
<div class="t" style="left:426.5px;top:181.84px;font-size:12px;line-height:12px;color:#111;">Consumo por tarifa, l/100km:</div>
<div class="t" style="left:426.5px;top:204.84px;font-size:12px;line-height:12px;color:#111;">Consumo sazonal:</div>
<div class="t" style="left:426.5px;top:227.84px;font-size:12px;line-height:12px;color:#111;">Limite de velocidade urbana, km/h:</div>
<div class="t" style="left:426.5px;top:252.84px;font-size:12px;line-height:12px;color:#111;">Intervalo máximo entre mensagens, segundos:</div>
<div class="t" style="left:426.5px;top:279.84px;font-size:12px;line-height:12px;color:#111;">Valor diário das horas de motor, em horas :</div>
<div class="t" style="left:426.5px;top:305.84px;font-size:12px;line-height:12px;color:#111;">Coeficiente de quilometragem:</div>
<div class="inp" style="left:812px;top:177px">10</div>
<div class="inp" style="left:812px;top:223px">40</div>
<div class="inp" style="left:812px;top:249px">0</div>
<div class="inp" style="left:812px;top:275px">8</div>
<div class="inp" style="left:812px;top:301px">1</div>
<div class="a" style="left:812px;top:205px;width:12px;height:12px;border:1px solid #a9a9a9;border-radius:2.5px;background:#dedede;box-shadow:inset 0 0 0 1px #ececec"></div>
<svg class="a" style="left:686px;top:251px" width="19" height="19"><circle cx="9.5" cy="9.3" r="7.8" fill="none" stroke="#7a7a7a" stroke-width="1"/><text x="9.5" y="13.8" font-family="Liberation Sans" font-size="12" fill="#777" text-anchor="middle">?</text></svg>
<div class="sep" style="left:404px;top:333px"></div>
<div class="t" style="left:407.5px;top:343.84px;font-size:12px;line-height:12px;font-weight:bold;">Excesso de velocidade</div>
<div class="t" style="left:426.5px;top:370.84px;font-size:12px;line-height:12px;color:#111;">Detecção de excesso de velocidade:</div>
<div class="t" style="left:426.5px;top:393.84px;font-size:12px;line-height:12px;color:#111;">Tolerância no excesso de velocidade,</div>
<div class="t" style="left:426.5px;top:410.14px;font-size:12px;line-height:12px;color:#111;">km/h:</div>
<div class="t" style="left:426.5px;top:429.84px;font-size:12px;line-height:12px;color:#111;">Tempo mínimo de excesso de velocidade,</div>
<div class="t" style="left:426.5px;top:445.44px;font-size:12px;line-height:12px;color:#111;">segundos:</div>
<div class="inp" style="left:812px;top:433px">0</div>
<div class="sel" style="left:663px;top:366px;height:22px">Utilizar limites para estradas</div>
<svg class="a" style="left:846px;top:372px" width="12" height="10"><path d="M2 3 L10 3 L6 7 Z" fill="#000"/></svg>
<div class="a" style="left:663px;top:388px;width:199px;height:49px;border:1px solid #7a9fd8;background:#fff"></div>
<div class="a" style="left:664px;top:420px;width:197px;height:15px;background:#1e90ff"></div>
<div class="t" style="left:669.5px;top:389.84px;font-size:12px;line-height:12px;color:#222;">Nenhum</div>
<div class="t" style="left:669.5px;top:404.84px;font-size:12px;line-height:12px;color:#222;">Utilizar limite fixo</div>
<div class="t" style="left:669.5px;top:420.84px;font-size:12px;line-height:12px;color:#fff;">Utilizar limites para estradas</div>
<div class="t" style="left:650px;top:389.00px;font-size:13px;line-height:13px;color:#f21d1d;">1</div>
<div class="t" style="left:650px;top:407.00px;font-size:13px;line-height:13px;color:#f21d1d;">2</div>
<div class="t" style="left:650px;top:425.00px;font-size:13px;line-height:13px;color:#f21d1d;">3</div>
<div class="t" style="left:865px;top:425.00px;font-size:13px;line-height:13px;color:#f21d1d;">3</div>
<div class="t" style="left:878px;top:425.00px;font-size:13px;line-height:13px;color:#f21d1d;letter-spacing:0.34px;">Speed limit by OSMap</div>
<div class="t" style="left:865px;top:443.00px;font-size:13px;line-height:13px;color:#f21d1d;">4</div>
<div class="t" style="left:878px;top:443.00px;font-size:13px;line-height:13px;color:#f21d1d;letter-spacing:0.42px;">Speed limit by Google</div>
<div class="sep" style="left:404px;top:470px"></div>
<div class="t" style="left:407.5px;top:480.84px;font-size:12px;line-height:12px;font-weight:bold;">Atividade do motorista</div>
<div class="t" style="left:426.5px;top:507.84px;font-size:12px;line-height:12px;color:#111;">Fonte de atividade do motorista:</div>
<div class="sel" style="left:663px;top:503px;height:22px">Vinculações</div>
<svg class="a" style="left:846px;top:509px" width="12" height="10"><path d="M2 3 L10 3 L6 7 Z" fill="#000"/></svg>
<div class="sep" style="left:404px;top:535px"></div>
<div class="t" style="left:407.5px;top:545.84px;font-size:12px;line-height:12px;font-weight:bold;">Cor do nome da unidade</div>
<div class="a" style="left:663px;top:545px;width:26px;height:14px;background:#000"></div>
<div class="a" style="left:696px;top:545px;width:1px;height:14px;background:#c8c8c8"></div>
<div class="a" style="left:704px;top:545px;width:14px;height:14px;background:#009933;border:1px solid #111"></div>
<div class="a" style="left:722px;top:545px;width:14px;height:14px;background:#00cccc;border:1px solid #111"></div>
<div class="a" style="left:740px;top:545px;width:14px;height:14px;background:#0066cc;border:1px solid #111"></div>
<div class="a" style="left:758px;top:545px;width:14px;height:14px;background:#0000ff;border:1px solid #111"></div>
<div class="a" style="left:776px;top:545px;width:14px;height:14px;background:#660099;border:1px solid #111"></div>
<div class="a" style="left:794px;top:545px;width:14px;height:14px;background:#ff0000;border:1px solid #111"></div>
<div class="a" style="left:812px;top:545px;width:14px;height:14px;background:#ff6600;border:1px solid #111"></div>
<div class="a" style="left:830px;top:545px;width:14px;height:14px;background:#ffcc00;border:1px solid #111"></div>
<div class="a" style="left:848px;top:545px;width:14px;height:14px;background:#ffff00;border:1px solid #111"></div>
<div class="sep" style="left:404px;top:568px"></div>
<div class="a" style="left:399px;top:570px;width:791px;height:16px;overflow:hidden">
<div class="t" style="left:8.5px;top:8.84px;font-size:12px;line-height:12px;font-weight:bold">Cor do percurso</div>
</div>
<div class="btn" style="left:404px;width:139px">Restaurar Propriedades</div>
<div class="btn" style="left:548px;width:129px">Exportar para Arquivo</div>
<div class="btn" style="left:1067px;width:65px">Cancelar</div>
<div class="btn ok" style="left:1142px;width:64px">OK</div>
</body></html>
